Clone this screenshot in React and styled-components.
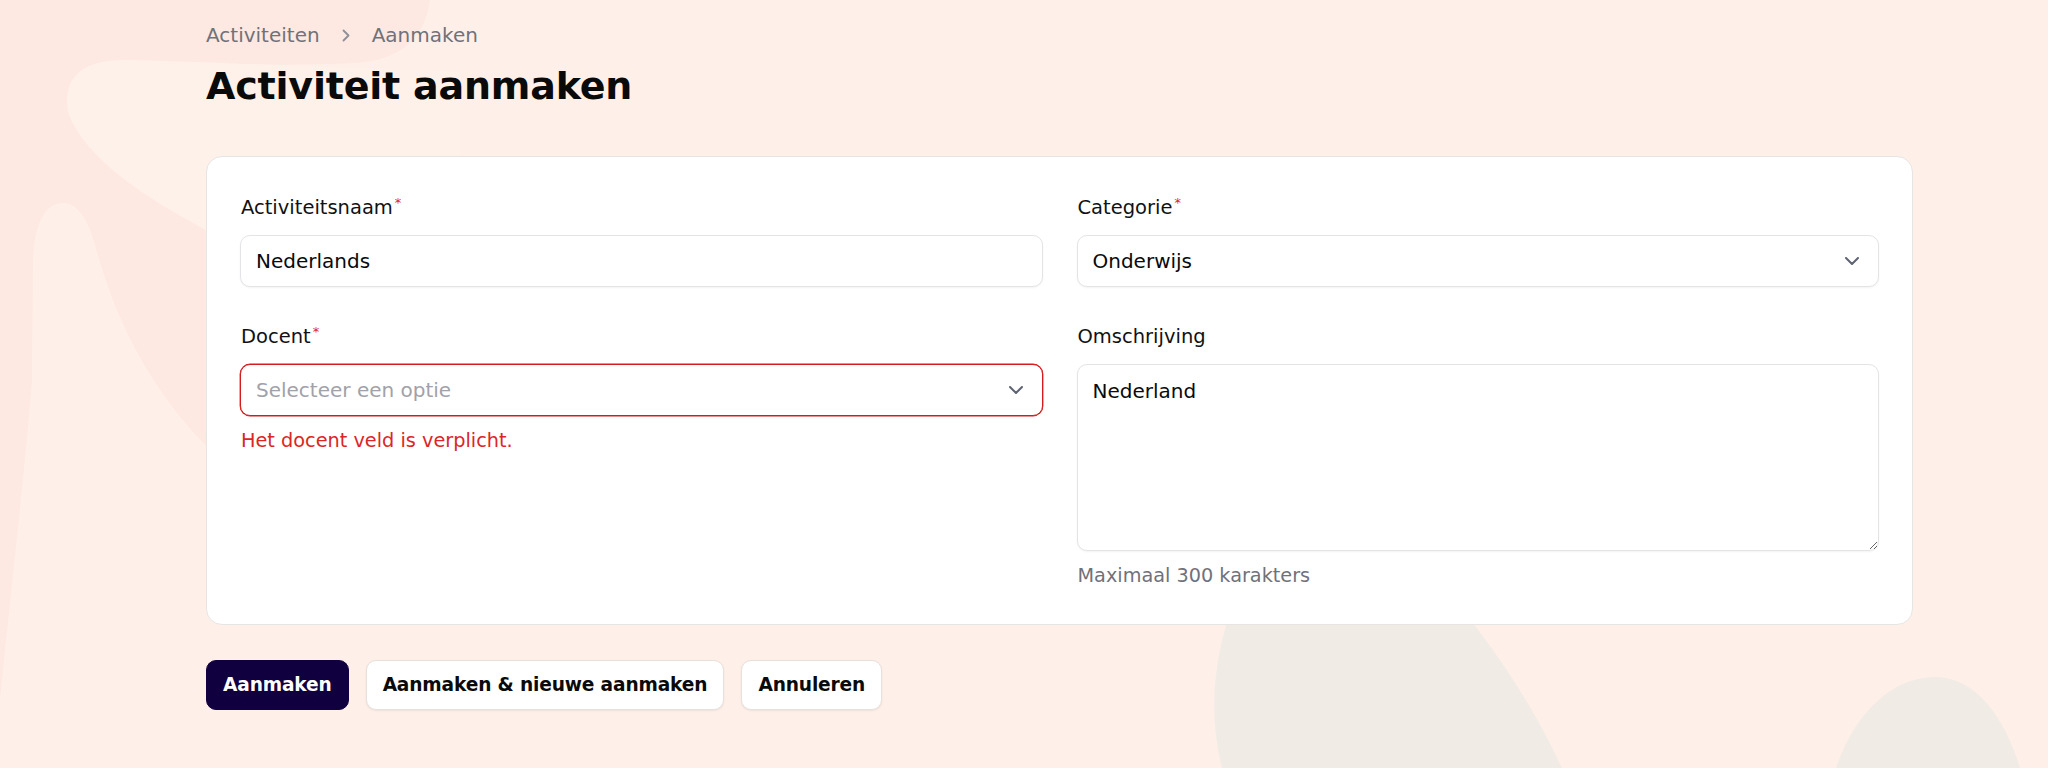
import React from 'react';
import styled, { createGlobalStyle } from 'styled-components';

const GlobalStyle = createGlobalStyle`
  html, body { margin: 0; padding: 0; }
  body {
    font-family: "DejaVu Sans", "Liberation Sans", sans-serif;
    background: #fef0e9;
    color: #0a0a0a;
  }
  *, *::before, *::after { box-sizing: border-box; }
`;

const Page = styled.div`
  position: relative;
  width: 100%;
  min-height: 768px;
  overflow: hidden;
  background: #fef0e9;
`;

const Backdrop = styled.svg`
  position: absolute;
  top: 0;
  left: 0;
  width: 2048px;
  height: 768px;
  z-index: 0;
  pointer-events: none;
`;

const Content = styled.main`
  position: relative;
  z-index: 1;
  padding: 23px 135px 0 206px;
  display: flex;
  flex-direction: column;
`;

const Breadcrumb = styled.nav`
  display: flex;
  align-items: center;
  font-size: 20px;
  line-height: 24px;
  color: #71717a;
`;

const Crumb = styled.span``;

const CrumbSep = styled.span`
  display: inline-flex;
  justify-content: center;
  align-items: center;
  width: 12px;
  margin: 0 20px;
  color: #8e8e98;
`;

const Title = styled.h1`
  margin: 16px 0 0;
  font-size: 38px;
  line-height: 46px;
  font-weight: 700;
  letter-spacing: -0.2px;
  color: #0a0a0a;
`;

const Card = styled.section`
  margin-top: 47px;
  background: #ffffff;
  border: 1px solid #e7e5e4;
  border-radius: 16px;
  padding: 39px 33px 36px;
  display: grid;
  grid-template-columns: 1fr 1fr;
  column-gap: 34px;
  row-gap: 38px;
  align-items: start;
`;

const Field = styled.div`
  display: flex;
  flex-direction: column;
  min-width: 0;
`;

const Label = styled.label`
  font-size: 19.5px;
  line-height: 24px;
  color: #111111;
  margin-bottom: 15px;
  padding-left: 1px;
`;

const Required = styled.span`
  color: #e11d1d;
  font-size: 13px;
  line-height: 0;
  vertical-align: 7px;
  margin-left: 2px;
`;

const TextInput = styled.input`
  height: 52px;
  width: 100%;
  padding: 0 15px;
  border: 1px solid #e4e4e7;
  border-radius: 10px;
  background: #ffffff;
  font-family: inherit;
  font-size: 20px;
  color: #0a0a0a;
  box-shadow: 0 1px 2px rgba(16, 24, 40, 0.05);
  outline: none;
`;

const SelectBox = styled.div`
  height: 52px;
  width: 100%;
  padding: 0 19px 0 15px;
  display: flex;
  align-items: center;
  justify-content: space-between;
  border: 1px solid ${(p) => (p.$invalid ? '#d41c1c' : '#e4e4e7')};
  border-radius: 10px;
  background: #ffffff;
  box-shadow: ${(p) => (p.$invalid ? '0 0 0 0.4px #d41c1c' : '0 1px 2px rgba(16, 24, 40, 0.05)')};
  cursor: pointer;
`;

const SelectValue = styled.span`
  font-size: 20px;
  line-height: 24px;
  color: ${(p) => (p.$placeholder ? '#a1a1aa' : '#0a0a0a')};
`;

const TextArea = styled.textarea`
  height: 187px;
  width: 100%;
  padding: 14px 15px;
  border: 1px solid #e4e4e7;
  border-radius: 10px;
  background: #ffffff;
  font-family: inherit;
  font-size: 20px;
  line-height: 24px;
  color: #0a0a0a;
  box-shadow: 0 1px 2px rgba(16, 24, 40, 0.05);
  outline: none;
  resize: both;
`;

const ErrorText = styled.p`
  margin: 13px 0 0;
  font-size: 19.3px;
  line-height: 24px;
  color: #dc2626;
  padding-left: 1px;
`;

const HintText = styled.p`
  margin: 13px 0 0;
  font-size: 19.25px;
  line-height: 24px;
  color: #71717a;
  padding-left: 1px;
`;

const Actions = styled.div`
  margin-top: 35px;
  display: flex;
  gap: 17px;
`;

const Button = styled.button`
  height: 50px;
  padding: 0 16px;
  border-radius: 10px;
  font-family: inherit;
  font-size: 18.6px;
  letter-spacing: -0.15px;
  font-weight: 700;
  line-height: 24px;
  cursor: pointer;
  border: 1px solid ${(p) => (p.$primary ? '#10003f' : '#e8e0dc')};
  background: ${(p) => (p.$primary ? '#10003f' : '#ffffff')};
  color: ${(p) => (p.$primary ? '#ffffff' : '#0a0a0a')};
  box-shadow: ${(p) => (p.$primary ? 'none' : '0 1px 2px rgba(60, 30, 20, 0.08)')};
`;

const ChevronRight = () => (
  <svg width="8" height="13" viewBox="0 0 8 13" fill="none">
    <path d="M1.5 1.5 L6.5 6.5 L1.5 11.5" stroke="currentColor" strokeWidth="1.8" strokeLinecap="round" strokeLinejoin="round" />
  </svg>
);

const ChevronDown = () => (
  <svg width="14" height="8" viewBox="0 0 14 8" fill="none">
    <path d="M1 1 L7 7 L13 1" stroke="#5f6473" strokeWidth="2" strokeLinecap="round" strokeLinejoin="round" />
  </svg>
);

const Background = () => (
  <Backdrop viewBox="0 0 2048 768" preserveAspectRatio="none" aria-hidden="true">
    <rect x="0" y="0" width="2048" height="768" fill="#fef0e9" />
    <path d="M0 0 H430 C424 42 398 60 355 63 C300 66 240 64 206 64 L206 768 L0 768 Z" fill="#fde9e1" />
    <path d="M206 230 C150 200 85 160 68 112 C62 75 85 60 125 60 C220 62 330 68 460 72 L460 300 Z" fill="#fef1ea" />
    <path d="M33 260 C35 215 50 203 63 203 C78 203 88 220 95 245 C115 320 150 390 210 450 L700 768 L0 768 L0 700 C10 600 25 470 32 380 Z" fill="#fef0e9" />
    <path d="M1235 600 C1215 650 1207 710 1222 768 L1562 768 C1530 700 1495 650 1455 600 Z" fill="#f0ebe5" />
    <path d="M1836 768 C1855 712 1893 677 1935 677 C1978 677 2006 722 2020 768 Z" fill="#f0ebe5" />
  </Backdrop>
);

export default function App() {
  return (
    <>
      <GlobalStyle />
      <Page>
        <Background />
        <Content>
          <Breadcrumb>
            <Crumb>Activiteiten</Crumb>
            <CrumbSep><ChevronRight /></CrumbSep>
            <Crumb>Aanmaken</Crumb>
          </Breadcrumb>
          <Title>Activiteit aanmaken</Title>

          <Card>
            <Field>
              <Label>Activiteitsnaam<Required>*</Required></Label>
              <TextInput defaultValue="Nederlands" />
            </Field>
            <Field>
              <Label>Categorie<Required>*</Required></Label>
              <SelectBox>
                <SelectValue>Onderwijs</SelectValue>
                <ChevronDown />
              </SelectBox>
            </Field>
            <Field>
              <Label>Docent<Required>*</Required></Label>
              <SelectBox $invalid>
                <SelectValue $placeholder>Selecteer een optie</SelectValue>
                <ChevronDown />
              </SelectBox>
              <ErrorText>Het docent veld is verplicht.</ErrorText>
            </Field>
            <Field>
              <Label>Omschrijving</Label>
              <TextArea defaultValue="Nederland" />
              <HintText>Maximaal 300 karakters</HintText>
            </Field>
          </Card>

          <Actions>
            <Button $primary>Aanmaken</Button>
            <Button>Aanmaken &amp; nieuwe aanmaken</Button>
            <Button>Annuleren</Button>
          </Actions>
        </Content>
      </Page>
    </>
  );
}
